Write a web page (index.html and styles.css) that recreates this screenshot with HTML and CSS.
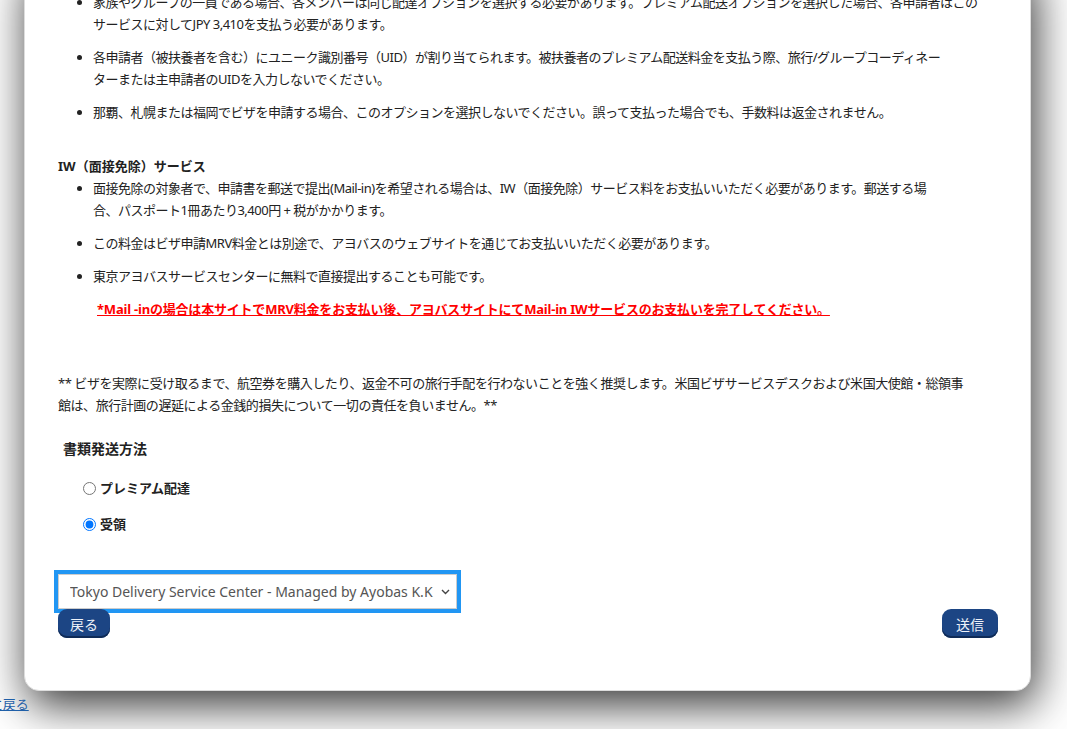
FILE: index.html
```html
<!DOCTYPE html>
<html lang="ja">
<head>
  <meta charset="UTF-8" />
  <title>配送オプション</title>
  <link rel="stylesheet" href="styles.css">
</head>
<body>

<div class="page">
  <div class="card">
    <ul class="notes">
      <li>家族やグループの一員である場合、各メンバーは同じ配達オプションを選択する必要があります。プレミアム配送オプションを選択した場合、各申請者はこの<br>サービスに対してJPY 3,410を支払う必要があります。</li>
      <li>各申請者（被扶養者を含む）にユニーク識別番号（UID）が割り当てられます。被扶養者のプレミアム配送料金を支払う際、旅行/グループコーディネー<br>ターまたは主申請者のUIDを入力しないでください。</li>
      <li>那覇、札幌または福岡でビザを申請する場合、このオプションを選択しないでください。誤って支払った場合でも、手数料は返金されません。</li>
    </ul>

    <h4 class="section-title">IW（面接免除）サービス</h4>
    <ul class="notes">
      <li>面接免除の対象者で、申請書を郵送で提出(Mail-in)を希望される場合は、IW（面接免除）サービス料をお支払いいただく必要があります。郵送する場<br>合、パスポート1冊あたり3,400円 + 税がかかります。</li>
      <li>この料金はビザ申請MRV料金とは別途で、アヨバスのウェブサイトを通じてお支払いいただく必要があります。</li>
      <li>東京アヨバスサービスセンターに無料で直接提出することも可能です。</li>
    </ul>
    <p class="warning">*Mail -inの場合は本サイトでMRV料金をお支払い後、アヨバスサイトにてMail-in IWサービスのお支払いを完了してください。</p>

    <p class="disclaimer">** ビザを実際に受け取るまで、航空券を購入したり、返金不可の旅行手配を行わないことを強く推奨します。米国ビザサービスデスクおよび米国大使館・総領事<br>館は、旅行計画の遅延による金銭的損失について一切の責任を負いません。**</p>

    <form class="delivery-form" onsubmit="return false;">
      <div class="field-label">書類発送方法</div>
      <div class="radio-group">
        <label class="radio-row"><input type="radio" name="delivery" value="premium"> プレミアム配達</label>
        <label class="radio-row"><input type="radio" name="delivery" value="pickup" checked> 受領</label>
      </div>

      <div class="select-wrap">
        <select class="center-select" name="center">
          <option>Tokyo Delivery Service Center - Managed by Ayobas K.K</option>
        </select>
        <svg class="select-arrow" width="9" height="6" viewBox="0 0 9 6">
          <path d="M1 1l3.5 3.5L8 1" fill="none" stroke="#444" stroke-width="1.4" />
        </svg>
      </div>

      <div class="actions">
        <button type="button" class="btn">戻る</button>
        <button type="submit" class="btn btn-submit">送信</button>
      </div>
    </form>
  </div>

  <div class="back-row">
    <a href="#" class="back-link">トップページに戻る</a>
  </div>
</div>

</body>
</html>
```

FILE: styles.css
```css
body {
  margin: 0;
  background: #fff;
  font-family: "Noto Sans", "Noto Sans CJK JP", sans-serif;
  font-size: 13px;
  line-height: 22px;
  color: #222;
}

.page {
  padding: 0 36px 40px 24px;
}

.card {
  margin-top: -40px;
  padding: 30px 32px 52px 33px;
  background: #fff;
  border: 1px solid #ddd;
  border-radius: 15px;
  box-shadow: 4px 14px 45px rgba(0, 0, 0, 0.8);
}

.notes {
  margin: 0;
  padding-left: 35px;
  letter-spacing: -0.5px;
}

.notes li {
  margin-bottom: 11px;
}

.notes li:last-child {
  margin-bottom: 0;
}

.section-title {
  margin: 32px 0 0;
  font-size: 13px;
  font-weight: bold;
}

.warning {
  margin: 11px 0 0;
  padding-left: 39px;
  color: #f00;
  font-weight: bold;
  letter-spacing: -0.2px;
  text-decoration: underline;
}

.disclaimer {
  margin: 52px 0 0;
  letter-spacing: -0.45px;
}

.delivery-form {
  margin: 22px 0 0;
}

.field-label {
  padding-left: 5px;
  font-size: 14px;
  font-weight: bold;
}

.radio-group {
  display: flex;
  flex-direction: column;
  gap: 14px;
  margin-top: 17px;
  padding-left: 25px;
}

.radio-row {
  display: flex;
  align-items: center;
  gap: 4px;
  font-weight: bold;
}

.radio-row input {
  width: 13px;
  height: 13px;
  margin: 0;
}

.select-wrap {
  position: relative;
  width: 399px;
  margin-top: 39px;
}

.center-select {
  display: block;
  width: 399px;
  height: 35px;
  padding: 0 20px 0 11px;
  border: 1px solid #ccc;
  background: #fff;
  color: #555;
  font-family: "Noto Sans", sans-serif;
  font-size: 14px;
  outline: 4px solid #2196f3;
  appearance: none;
  -webkit-appearance: none;
}

.select-arrow {
  position: absolute;
  right: 7px;
  top: 15px;
  pointer-events: none;
}

.actions {
  display: flex;
  justify-content: space-between;
  position: relative;
}

.btn {
  height: 29px;
  padding: 0 12px;
  border: none;
  border-radius: 9px;
  background: #1c4584;
  color: #eef2f9;
  font-family: "Noto Sans CJK JP", sans-serif;
  font-size: 14px;
  box-shadow: inset 0 -2px 0 #0f2b57;
  cursor: pointer;
}

.btn-submit {
  padding: 0 14px;
}

.back-row {
  margin: 2px 0 0 -112px;
}

.back-link {
  color: #1f5fa8;
  text-decoration: underline;
}
```
